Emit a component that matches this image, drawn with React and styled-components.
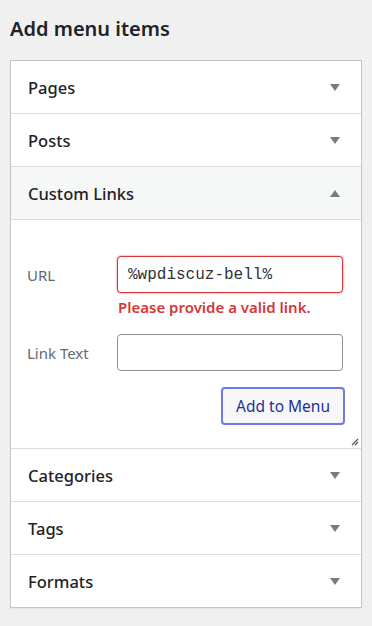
import styled, { createGlobalStyle } from 'styled-components';

const GlobalStyle = createGlobalStyle`
    body {
        margin: 0;
        background: #f0f0f1;
        font-family: "Noto Sans", "Open Sans", sans-serif;
        color: #1d2327;
    }
`;

const sections = [
    { title: 'Pages' },
    { title: 'Posts' },
    { title: 'Custom Links', open: true },
    { title: 'Categories' },
    { title: 'Tags' },
    { title: 'Formats' },
];

function Arrow({ up }) {
    return (
        <ArrowIcon width="10" height="7" viewBox="0 0 10 7" $up={up}>
            <path d="M0 0 L10 0 L5 7 Z" fill="#787c82" />
        </ArrowIcon>
    );
}

function CustomLinks() {
    return (
        <Panel>
            <Field>
                <Label>URL</Label>
                <Input type="text" defaultValue="%wpdiscuz-bell%" $mono $invalid />
                <span />
                <ErrorText>Please provide a valid link.</ErrorText>
            </Field>
            <Field $gapTop>
                <Label>Link Text</Label>
                <Input type="text" />
            </Field>
            <Actions>
                <AddButton type="button">Add to Menu</AddButton>
            </Actions>
            <Grip width="8" height="8" viewBox="0 0 8 8">
                <path d="M7 1 L1 7 M7 4 L4 7" stroke="#50575e" strokeWidth="1.2" />
            </Grip>
        </Panel>
    );
}

export default function App() {
    return (
        <Page>
            <GlobalStyle />
            <Heading>Add menu items</Heading>
            <Box>
                {sections.map((s) => (
                    <Section key={s.title}>
                        <SectionHeader $open={s.open}>
                            <SectionTitle>{s.title}</SectionTitle>
                            <Arrow up={s.open} />
                        </SectionHeader>
                        {s.open && <CustomLinks />}
                    </Section>
                ))}
            </Box>
        </Page>
    );
}

const Page = styled.div`
    padding: 14px 10px 17px 10px;
`;

const Heading = styled.h2`
    margin: 0 0 17px 0;
    font-size: 20px;
    line-height: 29px;
    font-weight: 600;
    color: #1d2327;
`;

const Box = styled.div`
    border: 1px solid #c3c4c7;
    background: #fff;
    box-shadow: 0 1px 1px rgba(0, 0, 0, 0.04);
`;

const Section = styled.div`
    border-bottom: 1px solid #dcdcde;
    &:last-child {
        border-bottom: 0;
    }
`;

const SectionHeader = styled.div`
    height: 52px;
    display: flex;
    align-items: center;
    justify-content: space-between;
    padding: 0 21px 0 17px;
    background: ${(p) => (p.$open ? '#f6f7f7' : '#fff')};
    border-bottom: ${(p) => (p.$open ? '1px solid #dcdcde' : '0')};
`;

const SectionTitle = styled.h3`
    margin: 0;
    font-size: 16.5px;
    font-weight: 500;
    color: #1d2327;
`;

const ArrowIcon = styled.svg`
    display: block;
    transform: ${(p) => (p.$up ? 'rotate(180deg)' : 'none')};
`;

const Panel = styled.div`
    position: relative;
    padding: 36px 18px 23px 16px;
`;

const Field = styled.div`
    display: grid;
    grid-template-columns: 90px 1fr;
    align-items: center;
    margin-top: ${(p) => (p.$gapTop ? '17px' : '0')};
`;

const Label = styled.label`
    font-size: 15px;
    color: #646970;
`;

const Input = styled.input`
    box-sizing: border-box;
    width: 100%;
    height: 37px;
    margin: 0;
    padding: 0 10px;
    border: 1px solid ${(p) => (p.$invalid ? '#d63638' : '#8c8f94')};
    border-radius: 4px;
    background: #fff;
    color: #2c3338;
    font-size: 16px;
    font-family: ${(p) => (p.$mono ? '"Liberation Mono", "DejaVu Sans Mono", monospace' : 'inherit')};
    box-shadow: ${(p) => (p.$invalid ? '0 0 2px rgba(214, 54, 56, 0.8)' : 'none')};
    &:focus {
        outline: none;
    }
`;

const ErrorText = styled.p`
    margin: 0;
    padding-left: 1px;
    font-size: 15px;
    line-height: 20px;
    padding-top: 4px;
    font-weight: 600;
    color: #d63638;
`;

const Actions = styled.div`
    display: flex;
    justify-content: flex-end;
    margin-top: 16px;
`;

const AddButton = styled.button`
    box-sizing: border-box;
    height: 38px;
    padding: 0 13px;
    margin-right: -2px;
    border: 2px solid #6c7aea;
    border-radius: 4px;
    background: #f6f7f7;
    color: #2b2c9a;
    font-family: inherit;
    font-size: 15.5px;
    cursor: pointer;
`;

const Grip = styled.svg`
    position: absolute;
    right: 2px;
    bottom: 2px;
`;
